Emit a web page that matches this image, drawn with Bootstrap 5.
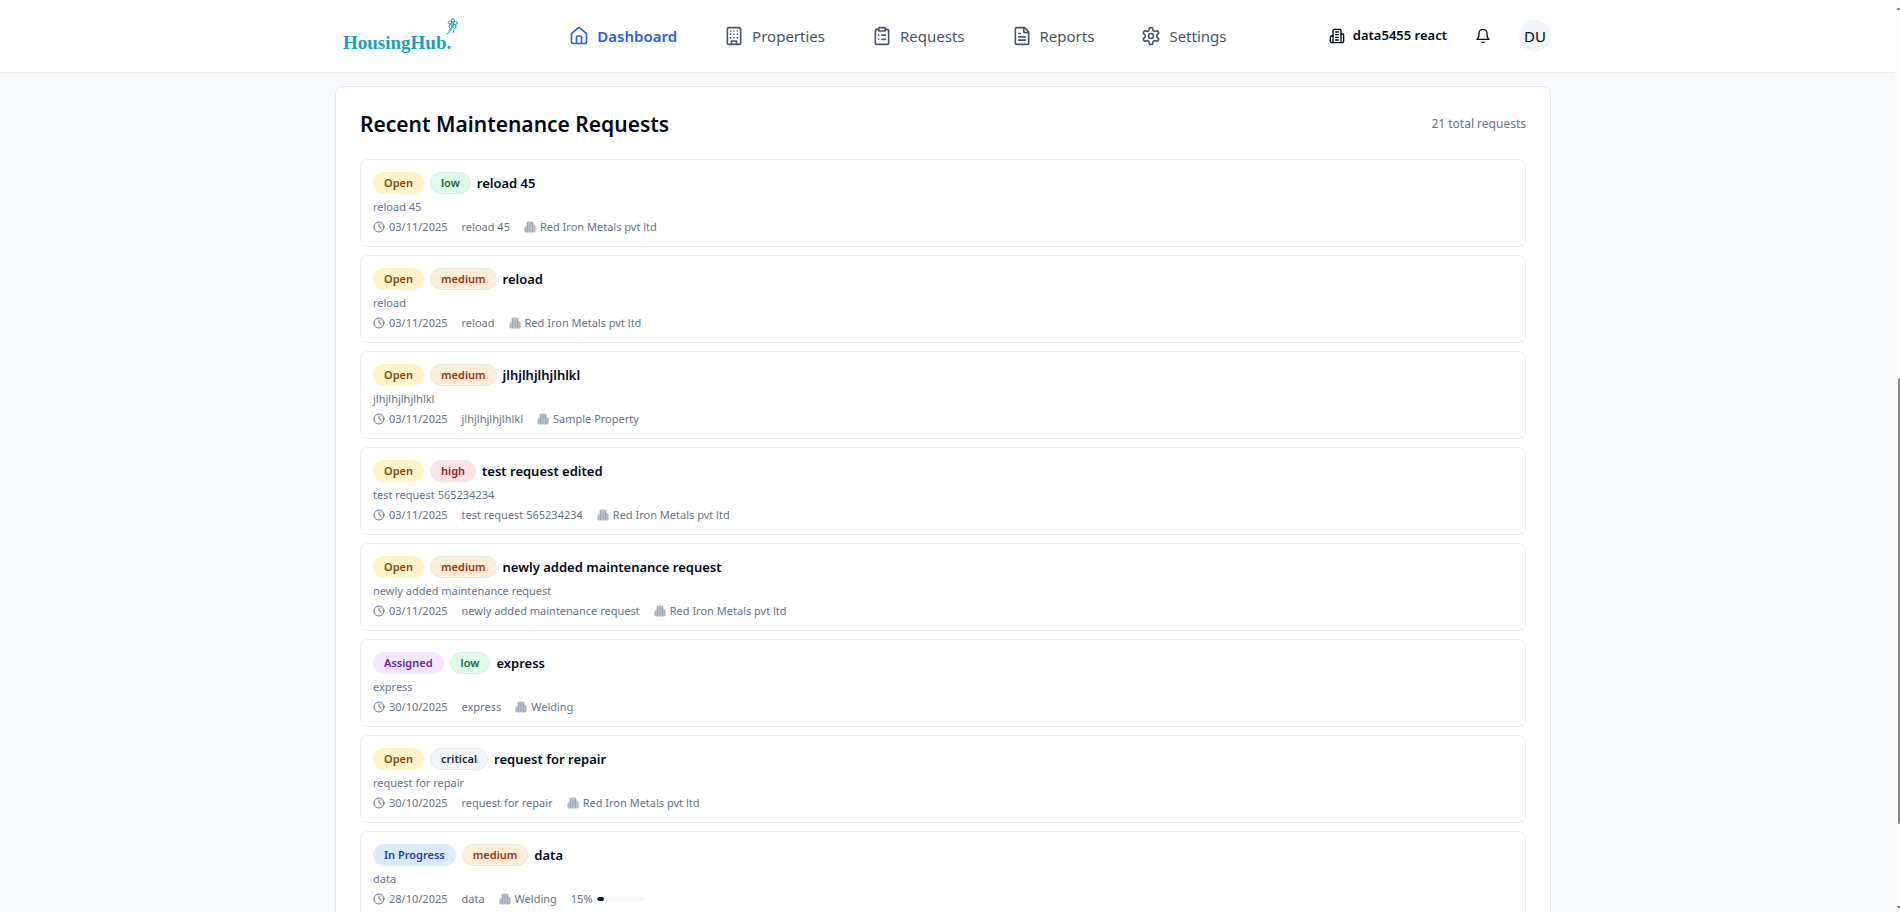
<!DOCTYPE html>
<html lang="en">
<head>
<meta charset="utf-8">
<meta name="viewport" content="width=device-width, initial-scale=1">
<title>HousingHub Dashboard</title>
<link href="https://cdn.jsdelivr.net/npm/bootstrap@5.3.0/dist/css/bootstrap.min.css" rel="stylesheet">
<style>
html, body { height: 100%; overflow: hidden; }
body { --ink: #020817; --slate: #64748b; --line: #e2e8f0; background: #f8fafc; color: var(--ink); font-family: "Noto Sans", "Open Sans", sans-serif; font-size: 14px; line-height: 20px; }
svg { flex: none; fill: none; stroke: currentColor; stroke-width: 2; stroke-linecap: round; stroke-linejoin: round; }
.icon-s { width: 12px; height: 12px; }
.icon-m { width: 16px; height: 16px; }
.icon-l { width: 20px; height: 20px; }
.shell { width: 100%; max-width: 1216px; margin: 0 auto; }
.viewport { overflow: hidden; }
.topbar { background: #fff; border-bottom: 1px solid #eceef1; height: 73px; padding-right: 9px; }
.brand { width: 118px; height: 40px; margin-left: 6px; }
.brand text { font: 700 19px "Liberation Serif", serif; fill: #17a2b8; stroke: none; }
.brand g { stroke: #17a2b8; stroke-width: 1; }
.mainnav { gap: 47px; margin-left: 8px; font-size: 15px; line-height: 24px; }
.mainnav .nav-link { color: #4b5563; padding: 0; gap: 8px; }
.mainnav .nav-link.active { color: #2563eb; font-weight: 600; }
.org { font-size: 13px; font-weight: 600; color: var(--ink); gap: 8px; }
.bell { margin: 0 28px; color: var(--ink); }
.avatar { width: 32px; height: 32px; background: #f1f5f9; font-size: 15px; color: var(--ink); }
.page { padding-right: 9px; }
.panel { background: #fff; border: 1px solid var(--line); border-radius: 8px; margin-top: 13px; padding: 24px; }
.panel-top { margin-bottom: 22px; }
.panel h1 { font-size: 21px; line-height: 26px; font-weight: 600; }
.total { color: var(--slate); font-size: 12px; }
.request { border: 1px solid var(--line); border-radius: 8px; padding: 12px 12px 9px; }
.request-top { gap: 6px; margin-bottom: 3px; }
.request h2 { font-size: 13px; line-height: 22px; font-weight: 600; }
.pill { font-size: 11px; line-height: 20px; font-weight: 600; padding: 0 10px; border: 1px solid transparent; }
.ranked { border-color: var(--line); }
.open { background: #fef3c7; color: #92400e; }
.assigned { background: #f3e8ff; color: #6b21a8; }
.progressing { background: #dbeafe; color: #1e40af; }
.low { background: #dcfce7; color: #166534; }
.medium { background: #ffedd5; color: #9a3412; }
.high { background: #fee2e2; color: #991b1b; }
.critical { background: #f3f4f6; color: #1f2937; }
.detail, .meta { color: var(--slate); font-size: 11px; line-height: 20px; }
.meta { gap: 14px; }
.meter { width: 48px; height: 4px; background: #f1f5f9; border-radius: 4px; }
.meter .progress-bar { background: #0f172a; border-radius: 4px; }
.scroller { width: 5px; background: #fcfcfc; padding: 8px 0 4px; }
.scroller i { width: 3px; height: 2px; background: #888; }
.scroller b { width: 2px; background: #888; border-radius: 2px 0 0 2px; }
</style>
</head>
<body class="d-flex">
<svg class="d-none" aria-hidden="true">
<symbol id="clock" viewBox="0 0 24 24"><circle cx="12" cy="12" r="10"/><path d="M12 6v6l4 2"/></symbol>
<symbol id="building" viewBox="0 0 24 24"><path d="M6 22V4a2 2 0 0 1 2-2h8a2 2 0 0 1 2 2v18Z"/><path d="M6 12H4a2 2 0 0 0-2 2v6a2 2 0 0 0 2 2h2M18 9h2a2 2 0 0 1 2 2v9a2 2 0 0 1-2 2h-2M10 6h4M10 10h4M10 14h4M10 18h4"/></symbol>
<symbol id="place" viewBox="0 0 24 24"><path fill="currentColor" fill-opacity=".45" stroke="none" d="M5 23V4a3 3 0 0 1 3-3h8a3 3 0 0 1 3 3v4a4 4 0 0 1 4 4v8a3 3 0 0 1-3 3H4a3 3 0 0 1-3-3v-6a4 4 0 0 1 4-4z"/><path stroke-opacity=".35" d="M7 22V4M12 4v16M17 22V4M2 14v6M22 12v8"/></symbol>
</svg>
<div class="viewport flex-grow-1">
<header class="topbar">
<div class="shell h-100 d-flex align-items-center justify-content-between">
<a href="#" aria-label="HousingHub"><svg class="brand" viewBox="0 0 118 40"><text x="2" y="33">HousingHub.</text><g><circle cx="111.500" cy="8" r="1"/><ellipse cx="109" cy="6.500" rx="2" ry="1.500"/><ellipse cx="112" cy="4.500" rx="1.500" ry="2"/><ellipse cx="114.500" cy="7" rx="2" ry="1.500"/><ellipse cx="113.500" cy="10.500" rx="1.500" ry="2"/><ellipse cx="109.500" cy="10.500" rx="1.500" ry="2"/><path d="M111 12q-1 4-5 6M113 14l-1 3M109 13l-1 2"/></g></svg></a>
<nav class="mainnav nav">
<a class="nav-link active d-flex align-items-center" href="#"><svg class="icon-l" viewBox="0 0 24 24"><path d="M15 21v-8a1 1 0 0 0-1-1h-4a1 1 0 0 0-1 1v8"/><path d="M3 10a2 2 0 0 1 .709-1.528l7-6a2 2 0 0 1 2.582 0l7 6A2 2 0 0 1 21 10v9a2 2 0 0 1-2 2H5a2 2 0 0 1-2-2z"/></svg>Dashboard</a>
<a class="nav-link d-flex align-items-center" href="#"><svg class="icon-l" viewBox="0 0 24 24"><rect x="4" y="2" width="16" height="20" rx="2"/><path d="M9 22v-4h6v4M8 6h.01M12 6h.01M16 6h.01M8 10h.01M12 10h.01M16 10h.01M8 14h.01M12 14h.01M16 14h.01"/></svg>Properties</a>
<a class="nav-link d-flex align-items-center" href="#"><svg class="icon-l" viewBox="0 0 24 24"><rect x="8" y="2" width="8" height="4" rx="1"/><path d="M16 4h2a2 2 0 0 1 2 2v14a2 2 0 0 1-2 2H6a2 2 0 0 1-2-2V6a2 2 0 0 1 2-2h2M12 11h4M12 16h4M8 11h.01M8 16h.01"/></svg>Requests</a>
<a class="nav-link d-flex align-items-center" href="#"><svg class="icon-l" viewBox="0 0 24 24"><path d="M15 2H6a2 2 0 0 0-2 2v16a2 2 0 0 0 2 2h12a2 2 0 0 0 2-2V7ZM14 2v4a2 2 0 0 0 2 2h4M10 9H8M16 13H8M16 17H8"/></svg>Reports</a>
<a class="nav-link d-flex align-items-center" href="#"><svg class="icon-l" viewBox="0 0 24 24"><path d="M12.22 2h-.44a2 2 0 0 0-2 2v.18a2 2 0 0 1-1 1.73l-.43.25a2 2 0 0 1-2 0l-.15-.08a2 2 0 0 0-2.73.73l-.22.38a2 2 0 0 0 .73 2.73l.15.1a2 2 0 0 1 1 1.72v.51a2 2 0 0 1-1 1.74l-.15.09a2 2 0 0 0-.73 2.73l.22.38a2 2 0 0 0 2.73.73l.15-.08a2 2 0 0 1 2 0l.43.25a2 2 0 0 1 1 1.73V20a2 2 0 0 0 2 2h.44a2 2 0 0 0 2-2v-.18a2 2 0 0 1 1-1.73l.43-.25a2 2 0 0 1 2 0l.15.08a2 2 0 0 0 2.73-.73l.22-.39a2 2 0 0 0-.73-2.73l-.15-.08a2 2 0 0 1-1-1.74v-.5a2 2 0 0 1 1-1.74l.15-.09a2 2 0 0 0 .73-2.73l-.22-.38a2 2 0 0 0-2.73-.73l-.15.08a2 2 0 0 1-2 0l-.43-.25a2 2 0 0 1-1-1.73V4a2 2 0 0 0-2-2z"/><circle cx="12" cy="12" r="3"/></svg>Settings</a>
</nav>
<div class="d-flex align-items-center">
<button class="btn p-0 border-0 org d-flex align-items-center" type="button"><svg class="icon-m"><use href="#building"/></svg>data5455 react</button>
<button class="btn p-0 border-0 bell d-flex" type="button" aria-label="Notifications"><svg class="icon-m" viewBox="0 0 24 24"><path d="M6 8a6 6 0 0 1 12 0c0 7 3 9 3 9H3s3-2 3-9M10.300 21a1.940 1.940 0 0 0 3.400 0"/></svg></button>
<button class="btn p-0 border-0 avatar rounded-circle" type="button">DU</button>
</div>
</div>
</header>
<main class="page">
<section class="panel shell">
<div class="panel-top d-flex justify-content-between align-items-center"><h1 class="m-0">Recent Maintenance Requests</h1><span class="total">21 total requests</span></div>
<div id="requests" class="d-flex flex-column gap-2"></div>
</section>
</main>
</div>
<div class="scroller d-flex flex-column align-items-end" aria-hidden="true"><i></i><div class="flex-grow-1 d-flex flex-column align-items-end w-100"><span style="flex:368"></span><b style="flex:446"></b><span style="flex:82"></span></div><i></i></div>
<script>
const rows = [
["Open","open","low","reload 45","03/11/2025","Red Iron Metals pvt ltd"],
["Open","open","medium","reload","03/11/2025","Red Iron Metals pvt ltd"],
["Open","open","medium","jlhjlhjlhjlhlkl","03/11/2025","Sample Property"],
["Open","open","high","test request edited","03/11/2025","Red Iron Metals pvt ltd",null,"test request 565234234"],
["Open","open","medium","newly added maintenance request","03/11/2025","Red Iron Metals pvt ltd"],
["Assigned","assigned","low","express","30/10/2025","Welding"],
["Open","open","critical","request for repair","30/10/2025","Red Iron Metals pvt ltd"],
["In Progress","progressing","medium","data","28/10/2025","Welding",15]
];
const icon = name => `<svg class="icon-s"><use href="#${name}"/></svg>`;
document.getElementById("requests").innerHTML = rows.map(([status, tone, priority, title, date, place, done, text = title]) => `
<article class="request">
<div class="request-top d-flex align-items-center"><span class="pill rounded-pill ${tone}">${status}</span><span class="pill ranked rounded-pill ${priority}">${priority}</span><h2 class="m-0">${title}</h2></div>
<div class="detail">${text}</div>
<div class="meta d-flex"><span class="d-flex align-items-center gap-1">${icon("clock")}${date}</span><span>${text}</span><span class="d-flex align-items-center gap-1">${icon("place")}${place}</span>${done ? `<span class="d-flex align-items-center gap-1">${done}%<span class="meter progress"><span class="progress-bar" style="width:${done}%"></span></span></span>` : ""}</div>
</article>`).join("");
</script>
<script src="https://cdn.jsdelivr.net/npm/bootstrap@5.3.0/dist/js/bootstrap.bundle.min.js"></script>
</body>
</html>
